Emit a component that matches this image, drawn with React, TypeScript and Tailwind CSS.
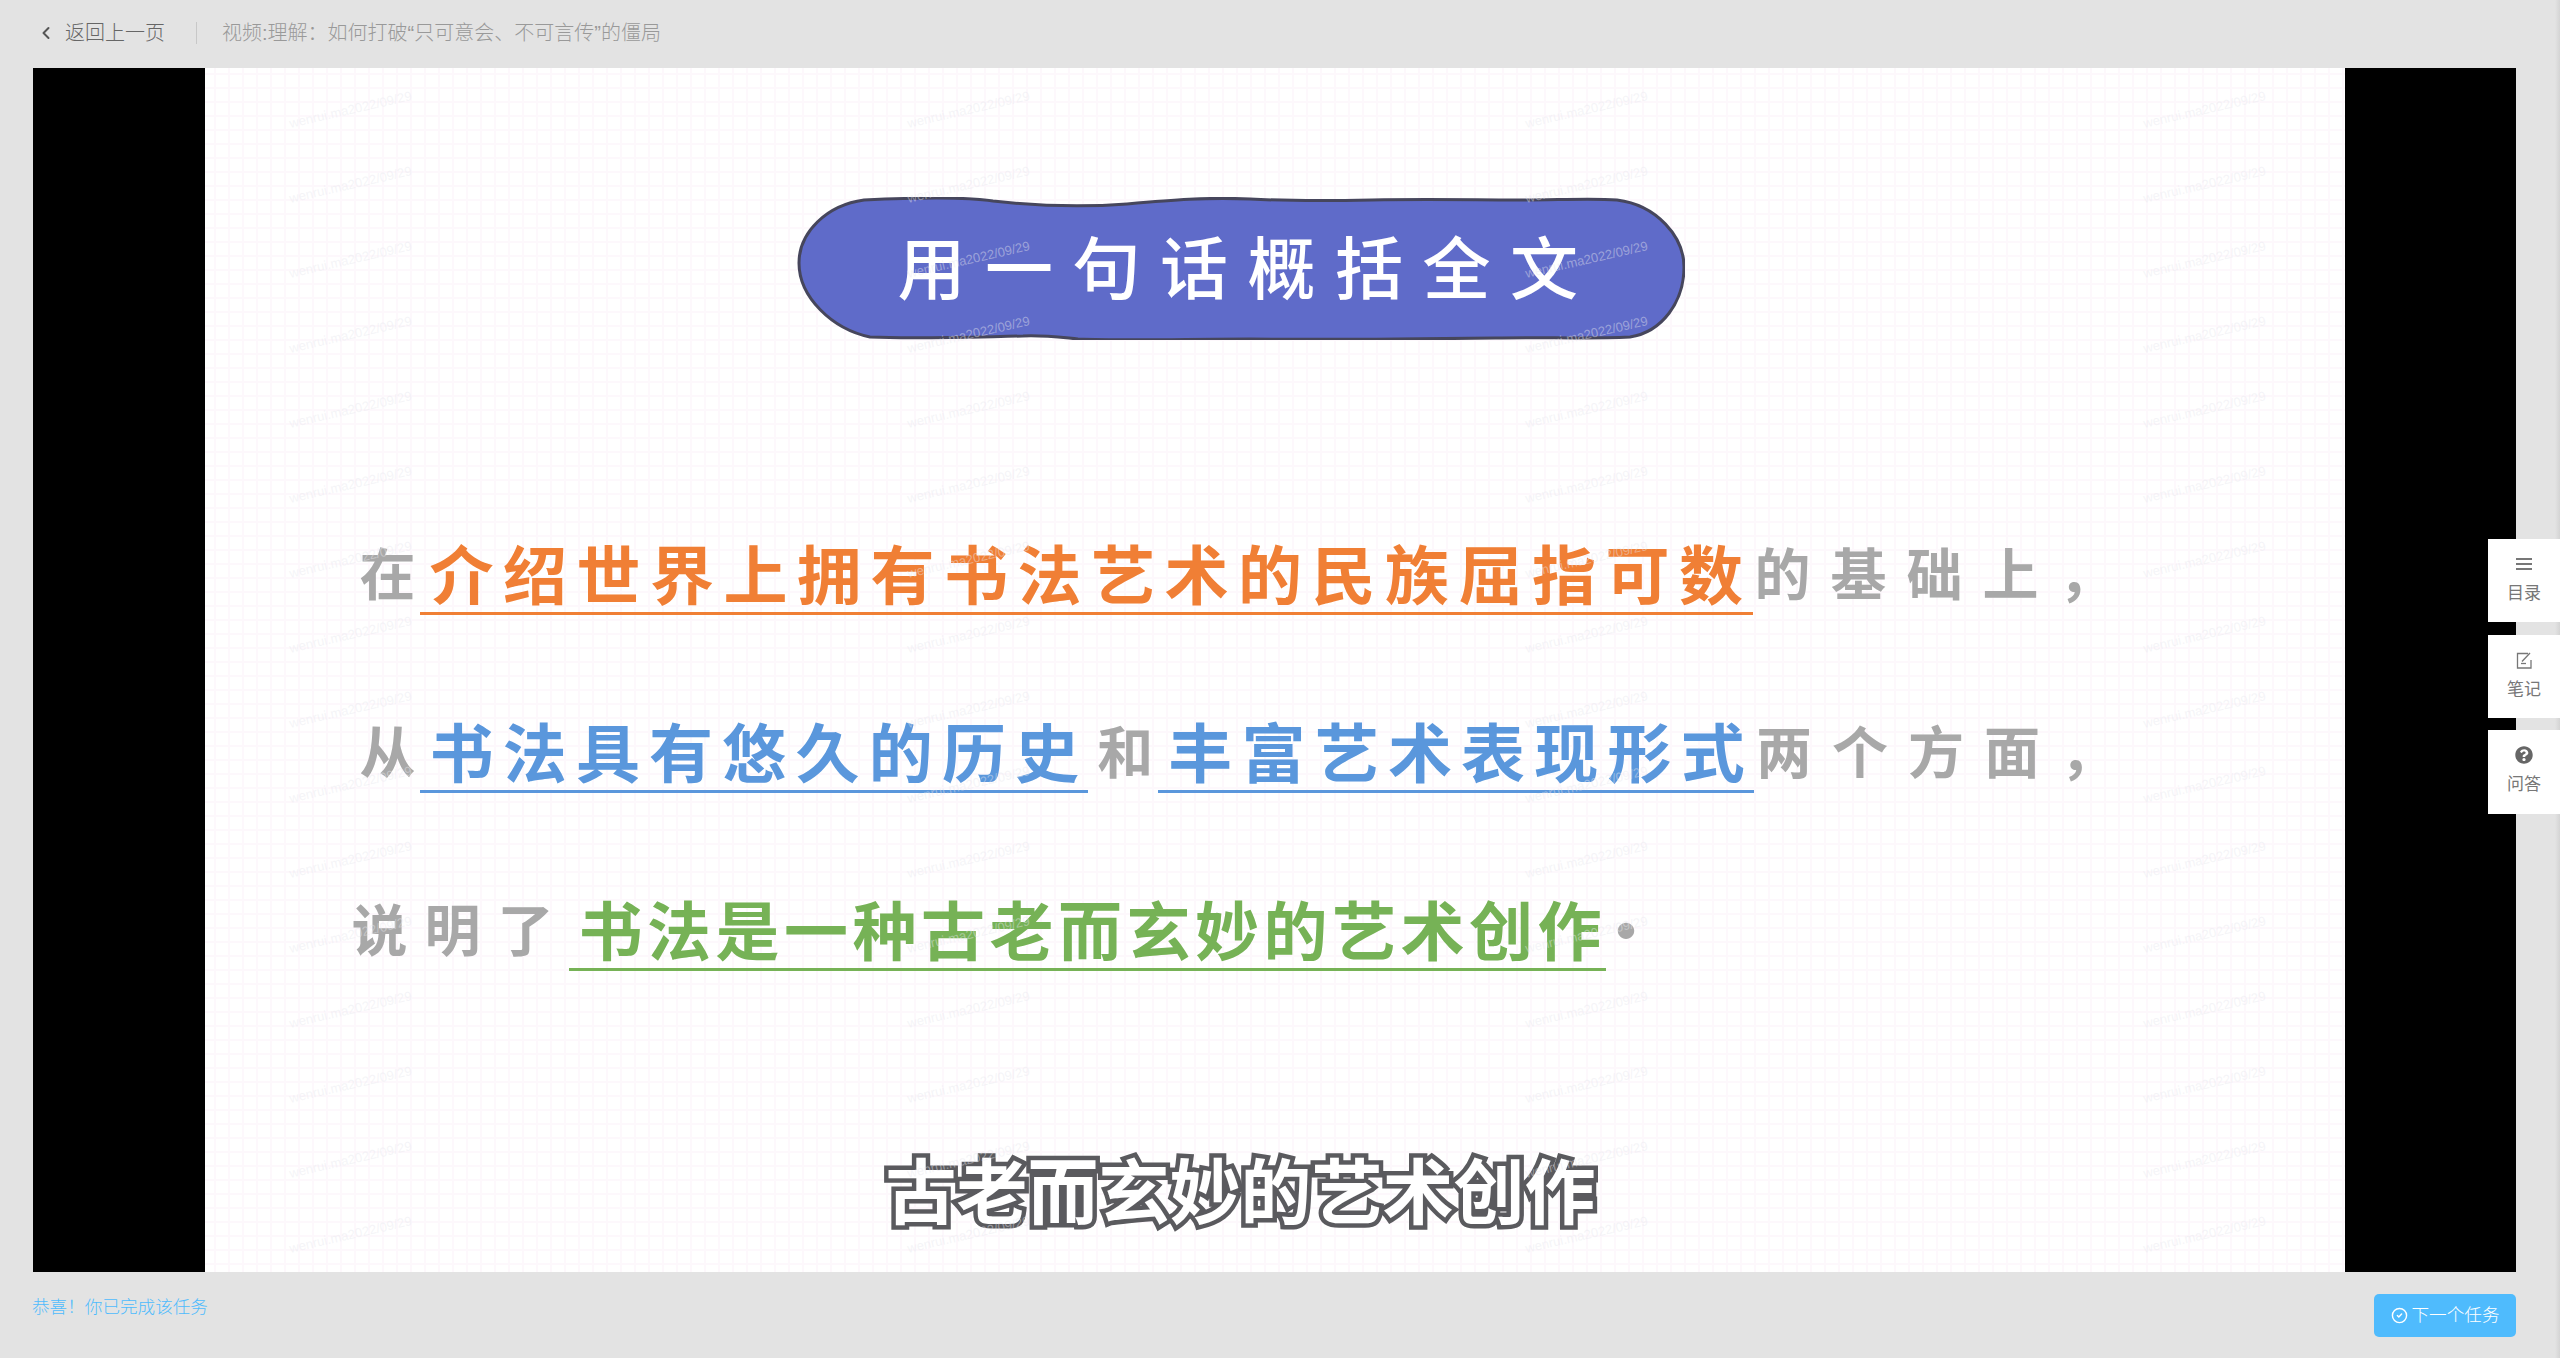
import { ChevronLeft, CircleCheck } from "lucide-react";
import { FaQuestionCircle } from "react-icons/fa";
import type { ReactNode } from "react";

const rows = Array.from({ length: 16 }, (_, i) => i);
const cols = [83, 701, 1319, 1937];

function Marked({ color, line, children, className }: { color: string; line: string; children: ReactNode; className: string }) {
  return (
    <span className={`relative inline-block text-[64px] ${color} ${className}`}>
      {children}
      <span className={`absolute left-[-10px] right-0 bottom-[-12px] h-[3px] ${line}`} />
    </span>
  );
}

function SideTab({ icon, label, className }: { icon: ReactNode; label: string; className?: string }) {
  return (
    <div className={`w-[72px] h-[83px] pt-[15px] bg-white flex flex-col items-center text-[#777] text-[17px] leading-[24px] ${className ?? ""}`}>
      <div className="h-[20px] flex items-center text-[#666]">{icon}</div>
      <span className="mt-[8px]">{label}</span>
    </div>
  );
}

export default function App() {
  return (
    <div className="relative w-[2560px] h-[1358px] overflow-hidden bg-[#e3e3e3] flex flex-col font-['Liberation_Sans','Noto_Sans_CJK_SC',sans-serif]">
      {/* top bar */}
      <header className="h-[68px] pb-[2px] pl-[36px] flex items-center text-[20px] font-light">
        <ChevronLeft size={20} strokeWidth={2.4} className="text-[#555]" />
        <span className="ml-[9px] text-[#666]">返回上一页</span>
        <span className="ml-[31px] h-[22px] w-px bg-[#c8c8c8]" />
        <span className="ml-[25px] text-[#999]">视频:理解：如何打破“只可意会、不可言传”的僵局</span>
      </header>

      {/* video */}
      <main className="mx-[33px] w-[2483px] h-[1204px] bg-black flex justify-center font-['Noto_Sans_CJK_SC',sans-serif]">
        <div className="relative w-[2140px] h-full overflow-hidden bg-white bg-[linear-gradient(#fdf8fc_2px,transparent_2px),linear-gradient(90deg,#fdf8fc_2px,transparent_2px)] bg-[size:14px_14px] bg-[position:9px_5px] flex flex-col">
          <div className="relative self-start ml-[592px] mt-[129px] w-[888px] h-[143px] pb-[8px] flex items-center justify-center text-white text-[68px] font-medium leading-none tracking-[19.5px] pl-[14px]">
            <svg className="absolute inset-0" width="888" height="143" viewBox="0 0 888 143" fill="none">
              <path
                d="M67 3C110 1 170 0 196 4C240 9 290 10 330 7C375 3 410 0 453 2C490 4 530 4 575 3C630 2 680 3 728 3C760 3 795 1 820 3C860 8 887 40 887 70C887 105 865 135 833 140C790 142 745 140 698 141C620 142 540 143 453 142C390 142 330 144 281 142C260 140 245 138 226 139C175 140 120 142 73 140C35 132 2 100 2 66C2 35 30 8 67 3Z"
                fill="#5f6bc9"
                stroke="#46465c"
                strokeWidth="3"
              />
            </svg>
            <span className="relative">用一句话概括全文</span>
          </div>

          <div className="mt-[196px] pl-[155px] h-[70px] flex items-center whitespace-nowrap text-[56px] leading-none font-bold text-[#a8a8a8]">
            <span>在</span>
            <Marked color="text-[#f07f35]" line="bg-[#f07f35]" className="ml-[14px] tracking-[9.5px]">
              介绍世界上拥有书法艺术的民族屈指可数
            </Marked>
            <span className="tracking-[20px] ml-[2px]">的基础上，</span>
          </div>

          <div className="mt-[108px] pl-[155px] h-[70px] flex items-center whitespace-nowrap text-[56px] leading-none font-bold text-[#a8a8a8]">
            <span>从</span>
            <Marked color="text-[#5a97dc]" line="bg-[#5a97dc]" className="ml-[14px] tracking-[9.2px]">
              书法具有悠久的历史
            </Marked>
            <span className="ml-[9px] mr-[4px]">和</span>
            <Marked color="text-[#5a97dc]" line="bg-[#5a97dc]" className="ml-[11px] tracking-[9.2px]">
              丰富艺术表现形式
            </Marked>
            <span className="tracking-[20px] ml-[2px]">两个方面，</span>
          </div>

          <div className="mt-[108px] pl-[147px] h-[70px] flex items-center whitespace-nowrap text-[56px] leading-none font-bold text-[#a8a8a8]">
            <span className="tracking-[17px]">说明了</span>
            <Marked color="text-[#76b256]" line="bg-[#76b256]" className="ml-[8px] tracking-[4.5px]">
              书法是一种古老而玄妙的艺术创作
            </Marked>
            <span className="-ml-[12px] text-[64px]">•</span>
          </div>

          <div className="mt-[190px] text-center pr-[68px] text-[71px] leading-none font-bold text-white [-webkit-text-stroke:9px_#5a5a5e] [paint-order:stroke_fill]">
            古老而玄妙的艺术创作
          </div>

          {rows.map((r) =>
            cols.map((x) => (
              <span
                key={`${r}-${x}`}
                className="absolute font-['Liberation_Sans',sans-serif] text-[13px] leading-none text-[#e8e8ee]/45 -rotate-[13deg] whitespace-nowrap"
                style={{ left: x, top: 35 + r * 75 }}
              >
                wenrui.ma2022/09/29
              </span>
            )),
          )}
        </div>
      </main>

      {/* footer */}
      <footer className="flex-1 pl-[32px] pr-[44px] flex items-start justify-between">
        <span className="mt-[22px] text-[17.6px] leading-[26px] font-light text-[#4fbbfd]">恭喜！你已完成该任务</span>
        <button className="mt-[22px] w-[142px] h-[43px] rounded-[5px] bg-[#4fbbfd] text-white text-[17.6px] font-light flex items-center justify-center gap-[4px]">
          <CircleCheck size={17} strokeWidth={2} />
          下一个任务
        </button>
      </footer>

      {/* edge of the window */}
      <div className="absolute inset-y-0 right-0 w-[5px] bg-gradient-to-r from-transparent to-[#d4d4d4]" />

      {/* side tabs */}
      <div className="absolute right-0 top-[539px] flex flex-col">
        <SideTab
          icon={
            <svg width="16" height="12" viewBox="0 0 16 12" fill="#777">
              <rect y="0" width="16" height="2" />
              <rect y="5" width="16" height="2" />
              <rect y="10" width="16" height="2" />
            </svg>
          }
          label="目录"
        />
        <SideTab
          className="mt-[13px]"
          icon={
            <svg width="17" height="17" viewBox="0 0 17 17" fill="none" stroke="#777" strokeWidth="1.3">
              <path d="M12 1.5H1.5V16H15V8" />
              <path d="M6 9.5L14 1" />
              <path d="M5 11.5H10" />
            </svg>
          }
          label="笔记"
        />
        <SideTab className="mt-[12px] h-[84px]" icon={<FaQuestionCircle size={18} />} label="问答" />
      </div>
    </div>
  );
}
